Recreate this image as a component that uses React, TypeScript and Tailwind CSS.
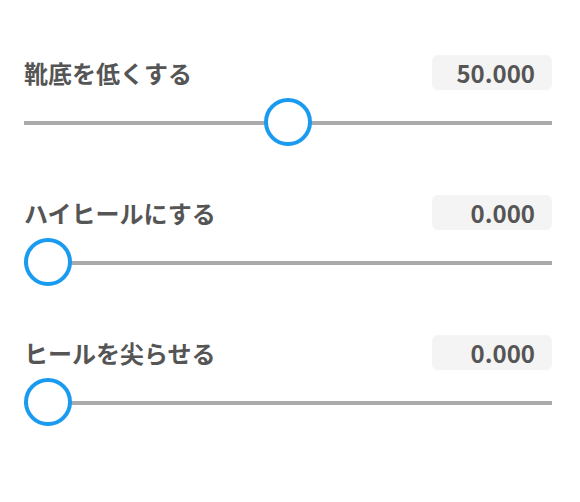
import React from "react";

const rows = [
  { label: "靴底を低くする", value: 50 },
  { label: "ハイヒールにする", value: 0 },
  { label: "ヒールを尖らせる", value: 0 },
];

function Row({ label, value }: { label: string; value: number }) {
  const pct = value / 100;
  return (
    <div className="flex flex-col">
      <div className="flex h-[35px] items-center justify-between">
        <span className="text-[24px] font-bold text-[#555555] leading-none">{label}</span>
        <div className="flex h-[35px] w-[120px] items-center justify-end rounded-md bg-[#f4f4f4] pr-[17px] text-[24px] font-bold text-[#555555] leading-none">
          {value.toFixed(3)}
        </div>
      </div>
      <div className="relative mt-2 h-12">
        <div className="absolute left-0 right-0 top-[23px] h-[4px] bg-[#aaaaaa]" />
        <div
          className="absolute top-0 h-12 w-12 rounded-full border-4 border-[#1a9bef] bg-white"
          style={{ left: `calc((100% - 48px) * ${pct})` }}
        />
      </div>
    </div>
  );
}

export default function App() {
  return (
    <div
      className="flex h-[502px] w-[580px] flex-col gap-[49px] bg-white pl-6 pr-7 pt-[55px]"
      style={{ fontFamily: '"Noto Sans CJK JP", "Noto Sans", sans-serif' }}
    >
      {rows.map((r) => (
        <Row key={r.label} {...r} />
      ))}
    </div>
  );
}
